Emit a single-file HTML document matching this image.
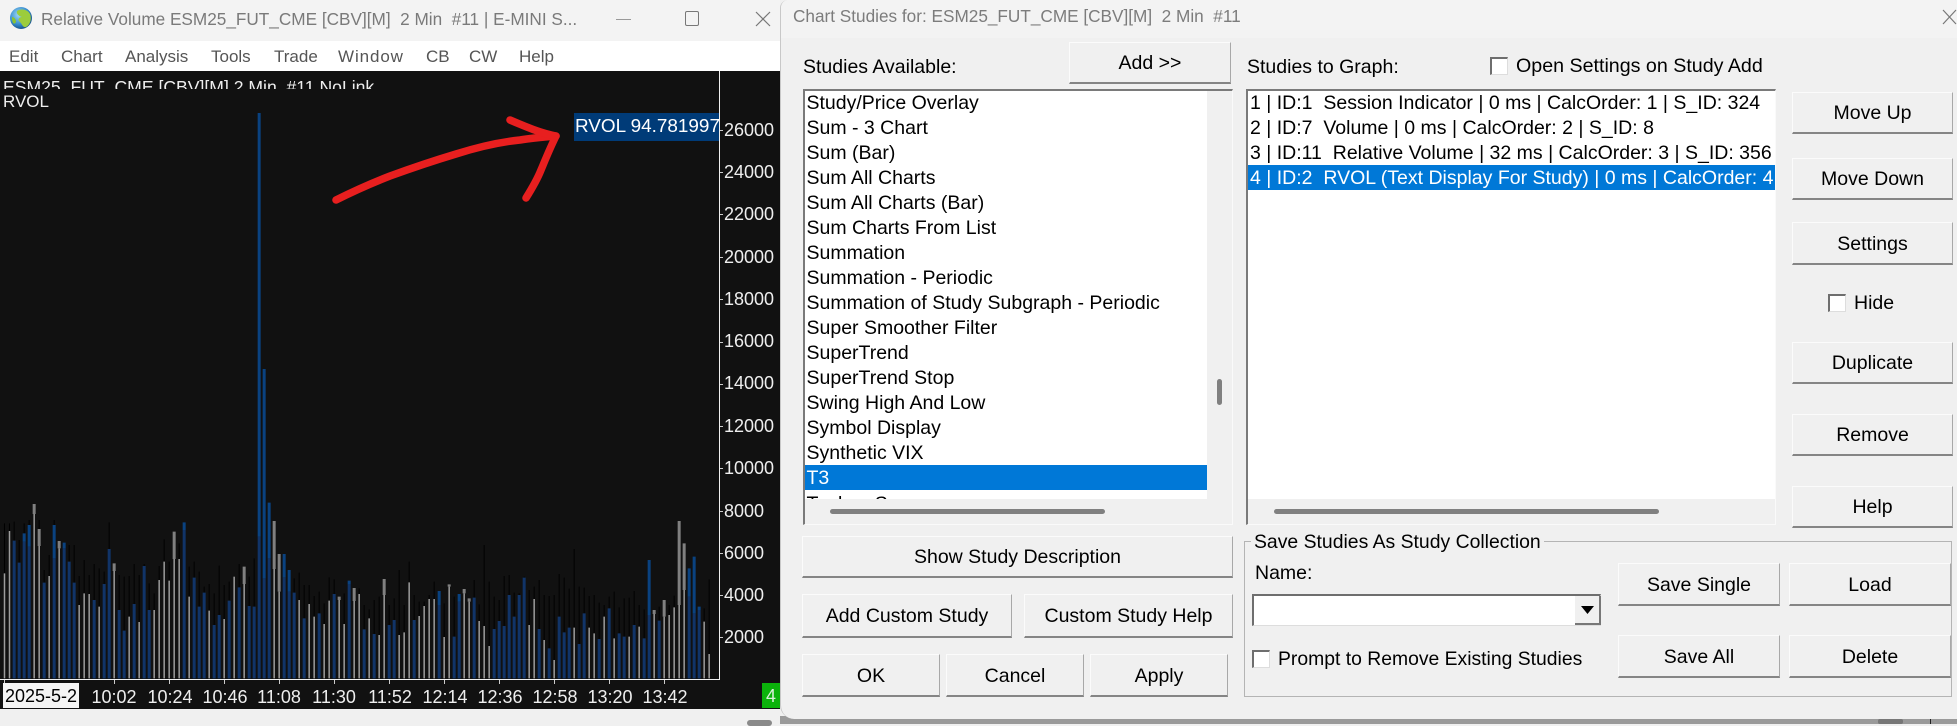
<!DOCTYPE html>
<html><head><meta charset="utf-8"><title>Chart Studies</title>
<style>
html,body{margin:0;padding:0;background:#f0f0f0}
body{width:1957px;height:724px;position:relative;overflow:hidden;font-family:"Liberation Sans",sans-serif;color:#000}
.a{position:absolute}
.t{position:absolute;white-space:pre;height:24px;line-height:24px}
.m{font-size:17px;color:#555;top:45px}
.y{font-size:18px;color:#eee;left:724px;height:22px;line-height:22px}
.x{font-size:18px;color:#eee;top:686px;width:60px;text-align:center;height:22px;line-height:22px}
.s{position:absolute;font-size:19.5px;white-space:pre;height:25px;line-height:25px;left:1.5px}
.b{position:absolute;box-sizing:border-box;background:#f0f0f0;border-top:1px solid #fbfbfb;border-left:1px solid #fbfbfb;border-right:1px solid #a8a8a8;border-bottom:2px solid #858585;display:flex;align-items:center;justify-content:center;font-size:19.5px;white-space:pre;padding-top:2px}
.f{font-size:19.5px}
.c{position:absolute;box-sizing:border-box;background:#fff;border-top:2px solid #6e6e6e;border-left:2px solid #6e6e6e;border-right:1px solid #ddd;border-bottom:1px solid #ddd;width:18px;height:18px}
.l{position:absolute;box-sizing:border-box;background:#f0f0f0;border-top:2px solid #7a7a7a;border-left:2px solid #7a7a7a;border-right:1px solid #fafafa;border-bottom:1px solid #fafafa;overflow:hidden}
.bar{position:absolute;height:5px;background:#808080;border-radius:3px}
</style></head><body>

<!-- Left window -->
<div class="a" style="left:0;top:0;width:780px;height:41px;background:#f3f3f3"></div>
<div class="a" style="left:0;top:41px;width:780px;height:30px;background:#fff"></div>
<svg class="a" style="left:9px;top:6px" width="24" height="24" viewBox="0 0 24 24">
<defs><radialGradient id="g" cx="40%" cy="35%" r="70%"><stop offset="0" stop-color="#a0daf5"/><stop offset=".6" stop-color="#3a8fd0"/><stop offset="1" stop-color="#124a80"/></radialGradient></defs>
<circle cx="12" cy="12" r="11" fill="url(#g)"/>
<path d="M8 5C13 2 19 4 21 8C23 13 21 19 17 21C14 22 13 18 11 16C8 14 10 11 13 11C10 10 7 8 8 5Z" fill="#9ccc3c"/>
<path d="M3 11C5 11 7 13 7 16C6 18 5 18 4 17C3 15 3 13 3 11Z" fill="#8ac234"/>
</svg>
<div class="t" style="left:41px;top:7px;font-size:17.2px;color:#7a7a7a">Relative Volume ESM25_FUT_CME [CBV][M]  2 Min  #11 | E-MINI S...</div>
<div class="a" style="left:616px;top:19px;width:15px;height:1px;background:#999"></div>
<div class="a" style="left:685px;top:11px;width:14px;height:15px;box-sizing:border-box;border:1px solid #777;border-radius:2px"></div>
<svg class="a" style="left:755px;top:11px" width="16" height="16"><path d="M1 1L15 15M15 1L1 15" stroke="#777" stroke-width="1.2"/></svg>
<div class="t m" style="left:9px">Edit</div>
<div class="t m" style="left:61px">Chart</div>
<div class="t m" style="left:125px">Analysis</div>
<div class="t m" style="left:211px">Tools</div>
<div class="t m" style="left:274px">Trade</div>
<div class="t m" style="left:338px;letter-spacing:.9px">Window</div>
<div class="t m" style="left:426px">CB</div>
<div class="t m" style="left:469px">CW</div>
<div class="t m" style="left:519px">Help</div>

<!-- Chart -->
<div class="a" style="left:0;top:71px;width:780px;height:638px;background:#111"></div>
<div class="a" style="left:0;top:71px;width:719px;height:18px;overflow:hidden">
<div class="t" style="left:3px;top:4px;font-size:17.6px;color:#eee">ESM25_FUT_CME [CBV][M] 2 Min  #11 NoLink</div></div>
<div class="t" style="left:3px;top:90px;font-size:17px;color:#eee">RVOL</div>

<svg class="a" style="left:0;top:0" width="720" height="680" viewBox="0 0 720 680">
<g transform="translate(-0.167 490) scale(.33333)" fill="none">
<path stroke="#000" stroke-width="3" d="M14 100V250M29 100V123M43 95V152M58 150V218M73 100V130M88 90V105M118 90V117M133 240V278M148 195V258M163 90V105M208 165V215M223 165V278M238 258V345M253 210V310M268 255V312M283 222V330M298 235V350M313 245V282M328 97V177M358 255V360M373 260V422M388 258V380M403 222V342M418 255V396M433 222V228M448 280V360M463 310V360M478 228V270M493 148V215M508 215V272M538 160V207M568 230V320M583 215V263M598 245V350M613 290V308M628 282V362M643 310V405M658 227V375M673 285V387M688 275V332M703 258V260M718 222V292M748 260V348M763 205V350M883 265V308M898 248V330M913 285V385M928 285V342M943 318V380M958 305V370M973 340V402M988 262V332M1003 268V312M1033 310V402M1078 295V312M1093 345V418M1108 358V385M1123 330V432M1138 320V435M1168 345V405M1183 325V390M1198 240V435M1213 345V427M1228 215V277M1243 315V390M1258 335V378M1273 335V348M1288 315V327M1303 275V327M1333 340V441M1363 320V440M1423 270V323M1438 343V393M1453 165V408M1468 275V468M1483 320V417M1498 330V393M1513 258V408M1528 255V315M1543 308V380M1558 310V315M1573 260V263M1588 300V405M1603 290V327M1618 270V417M1633 315V450M1648 318V475M1663 315V510M1678 252V380M1693 263V427M1708 296V413M1723 177V413M1738 290V462M1753 293V370M1768 318V413M1783 315V430M1798 338V447M1813 345V380M1828 320V355M1843 305V445M1858 352V430M1873 325V440M1888 323V440M1903 303V405M1918 345V410M1933 358V445M1978 350V392M2008 345V375M2023 317V352M2113 355V395M2128 268V492"/>
<path stroke="#113468" stroke-width="9" d="M43 152V565M58 218V565M73 155V565M88 170V565M133 278V565M163 205V565M193 175V565M208 215V565M223 278V565M283 330V565M313 282V565M328 177V565M358 360V565M373 422V565M403 342V565M433 228V565M448 360V565M553 120V565M583 263V565M598 350V565M613 308V565M643 405V565M658 375V565M688 332V565M718 292V565M748 348V565M763 350V565M778 140V565M793 265V565M808 205V565M853 262V565M868 305V565M883 308V565M913 385V565M958 370V565M1003 312V565M1048 283V565M1093 418V565M1123 432V565M1168 405V565M1183 390V565M1243 390V565M1318 345V565M1363 440V565M1378 335V565M1423 323V565M1483 417V565M1498 393V565M1513 408V565M1528 315V565M1543 380V565M1558 315V565M1573 263V565M1618 417V565M1648 475V565M1678 380V565M1693 427V565M1708 413V565M1738 462V565M1753 370V565M1798 447V565M1828 355V565M1858 430V565M1873 440V565M1903 405V565M1933 445V565M1948 375V565M1978 392V565M2068 320V565M2083 370V565M2098 360V565"/>
<path stroke="#0a4280" stroke-width="9" d="M73 130V155M88 105V170M163 105V205M193 158V175M553 97V120M778 -1131V140M793 -363V265M808 38V205M853 192V262M868 240V305M1048 272V283M1318 303V345M1378 312V335M1948 210V375M2068 235V320M2083 200V370M2098 350V360"/>
<path stroke="#808080" stroke-width="9" d="M103 42V72M118 117V168M178 153V175M343 220V243M523 125V207M733 230V282M823 93V237M838 192V305M1018 320V330M1063 294V333M1153 267V315M1348 283V290M1393 297V310M1408 325V335M1963 360V372M1993 330V380M2038 93V345M2053 160V300"/>
<path stroke="#9c9c9c" stroke-width="4.5" d="M14 250V565M29 123V565M103 72V565M118 168V565M148 258V565M178 175V565M238 345V565M253 310V565M268 312V565M298 350V565M343 243V565M388 380V565M418 396V565M463 360V565M478 270V565M493 215V565M508 272V565M523 207V565M538 207V565M568 320V565M628 362V565M673 387V565M703 260V565M733 282V565M823 237V565M838 305V565M898 330V565M928 342V565M943 380V565M973 402V565M988 332V565M1018 330V565M1033 402V565M1063 333V565M1078 312V565M1108 385V565M1138 435V565M1153 315V565M1198 435V565M1213 427V565M1228 277V565M1258 378V565M1273 348V565M1288 327V565M1303 327V565M1333 441V565M1348 290V565M1393 310V565M1408 335V565M1438 393V565M1453 408V565M1468 468V565M1588 405V565M1603 327V565M1633 450V565M1663 510V565M1723 413V565M1768 413V565M1783 430V565M1813 380V565M1843 445V565M1888 440V565M1918 410V565M1963 372V565M1993 380V565M2008 375V565M2023 352V565M2038 345V565M2053 300V565M2113 395V565M2128 492V565"/>
</g>
<!-- axes -->
<path d="M719.5 71V679.5H0" stroke="#f0f0f0" stroke-width="1" fill="none"/>
</svg>

<!-- axis ticks -->
<svg class="a" style="left:0;top:0" width="780" height="690">
<path stroke="#ccc" stroke-width="1" d="M720 130.5h3M720 172.5h3M720 214.5h3M720 257.5h3M720 299.5h3M720 342.5h3M720 384.5h3M720 426.5h3M720 468.5h3M720 511.5h3M720 553.5h3M720 595.5h3M720 637.5h3M4.5 680v4M114.5 680v4M169.5 680v4M224.5 680v4M279.5 680v4M334.5 680v4M389.5 680v4M444.5 680v4M499.5 680v4M554.5 680v4M609.5 680v4M664.5 680v4"/>
</svg>

<div class="t" style="left:574px;top:113px;width:145px;height:28px;line-height:28px;background:#003b78;color:#fff;font-size:18.9px;overflow:hidden;padding-left:1px;box-sizing:border-box">RVOL 94.781997</div>

<div class="t y" style="top:119px">26000</div>
<div class="t y" style="top:161px">24000</div>
<div class="t y" style="top:203px">22000</div>
<div class="t y" style="top:246px">20000</div>
<div class="t y" style="top:288px">18000</div>
<div class="t y" style="top:330px">16000</div>
<div class="t y" style="top:372px">14000</div>
<div class="t y" style="top:415px">12000</div>
<div class="t y" style="top:457px">10000</div>
<div class="t y" style="top:500px">8000</div>
<div class="t y" style="top:542px">6000</div>
<div class="t y" style="top:584px">4000</div>
<div class="t y" style="top:626px">2000</div>

<div class="t" style="left:3px;top:683px;width:76px;height:25px;line-height:27px;background:#f4f4f4;color:#000;font-size:18px;text-align:center">2025-5-2</div>
<div class="t x" style="left:84px">10:02</div>
<div class="t x" style="left:140px">10:24</div>
<div class="t x" style="left:195px">10:46</div>
<div class="t x" style="left:249px">11:08</div>
<div class="t x" style="left:304px">11:30</div>
<div class="t x" style="left:360px">11:52</div>
<div class="t x" style="left:415px">12:14</div>
<div class="t x" style="left:470px">12:36</div>
<div class="t x" style="left:525px">12:58</div>
<div class="t x" style="left:580px">13:20</div>
<div class="t x" style="left:635px">13:42</div>
<div class="t" style="left:762px;top:683px;width:18px;height:25px;line-height:26px;background:#0bb30b;color:#d8f0d8;font-size:18px;text-align:center">4</div>

<!-- Red arrow -->
<svg class="a" style="left:320px;top:105px" width="260" height="110" viewBox="320 105 260 110">
<path d="M336 200C352 192 372 183 390 176C412 168 436 160 456 154C478 147 500 142 520 140C532 138 544 137 556 136" fill="none" stroke="#e81f1f" stroke-width="7.5" stroke-linecap="round"/>
<path d="M510 120C524 126 540 133 556 136C550 148 546 158 541 170C537 180 531 190 526 198" fill="none" stroke="#e81f1f" stroke-width="7.5" stroke-linecap="round" stroke-linejoin="round"/>
</svg>

<!-- Bottom strip -->
<div class="a" style="left:747px;top:720px;width:25px;height:6px;border-radius:3px;background:#8a8a8a"></div>
<div class="a" style="left:780px;top:716px;width:1177px;height:8px;background:#9a9a9a"></div>
<div class="a" style="left:1878px;top:719px;width:25px;height:5px;background:#777;border-radius:2px"></div>
<div class="a" style="left:1930px;top:719px;width:1px;height:5px;background:#222"></div>

<!-- Dialog -->
<div class="a" style="left:780px;top:0;width:1177px;height:719px;background:#f0f0f0;border-left:1px solid #c8c8c8;box-sizing:border-box;border-bottom-left-radius:14px;border-top-left-radius:8px;overflow:hidden">
<div class="a" style="left:0;top:0;width:1177px;height:38px;background:#f3f3f3"></div>
</div>
<div class="t" style="left:793px;top:4px;font-size:17.2px;color:#7c7c7c">Chart Studies for: ESM25_FUT_CME [CBV][M]  2 Min  #11</div>
<svg class="a" style="left:1942px;top:9px" width="15" height="16"><path d="M1 1L14 15M14 1L1 15" stroke="#777" stroke-width="1.2"/></svg>

<div class="t f" style="left:803px;top:55px">Studies Available:</div>
<div class="b" style="left:1069px;top:42px;width:162px;height:42px">Add &gt;&gt;</div>
<div class="t f" style="left:1247px;top:55px">Studies to Graph:</div>
<div class="c" style="left:1490px;top:57px"></div>
<div class="t" style="left:1516px;top:54px;font-size:19.65px">Open Settings on Study Add</div>

<!-- Left list -->
<div class="l" style="left:803px;top:89px;width:430px;height:436px">
  <div class="a" style="left:0;top:0;width:402px;height:408px;background:#fff;overflow:hidden">
    <div class="s" style="top:0">Study/Price Overlay</div>
    <div class="s" style="top:25px">Sum - 3 Chart</div>
    <div class="s" style="top:50px">Sum (Bar)</div>
    <div class="s" style="top:75px">Sum All Charts</div>
    <div class="s" style="top:100px">Sum All Charts (Bar)</div>
    <div class="s" style="top:125px">Sum Charts From List</div>
    <div class="s" style="top:150px">Summation</div>
    <div class="s" style="top:175px">Summation - Periodic</div>
    <div class="s" style="top:200px">Summation of Study Subgraph - Periodic</div>
    <div class="s" style="top:225px">Super Smoother Filter</div>
    <div class="s" style="top:250px">SuperTrend</div>
    <div class="s" style="top:275px">SuperTrend Stop</div>
    <div class="s" style="top:300px">Swing High And Low</div>
    <div class="s" style="top:325px">Symbol Display</div>
    <div class="s" style="top:350px">Synthetic VIX</div>
    <div class="a" style="left:0;top:374px;width:402px;height:25px;background:#0078d7"></div>
    <div class="s" style="top:375px;color:#fff">T3</div>
    <div class="s" style="top:401px">Tenkan Sen</div>
  </div>
  <div class="bar" style="left:25px;top:418px;width:275px"></div>
  <div class="a" style="left:412px;top:288px;width:5px;height:26px;background:#808080;border-radius:3px"></div>
</div>

<!-- Right list -->
<div class="l" style="left:1246px;top:89px;width:530px;height:436px">
  <div class="a" style="left:0;top:0;width:527px;height:408px;background:#fff;overflow:hidden">
    <div class="s" style="left:2px;top:0">1 | ID:1  Session Indicator | 0 ms | CalcOrder: 1 | S_ID: 324</div>
    <div class="s" style="left:2px;top:25px">2 | ID:7  Volume | 0 ms | CalcOrder: 2 | S_ID: 8</div>
    <div class="s" style="left:2px;top:50px">3 | ID:11  Relative Volume | 32 ms | CalcOrder: 3 | S_ID: 356</div>
    <div class="a" style="left:0;top:74px;width:527px;height:25px;background:#0078d7"></div>
    <div class="s" style="left:2px;top:75px;color:#fff">4 | ID:2  RVOL (Text Display For Study) | 0 ms | CalcOrder: 4</div>
  </div>
  <div class="bar" style="left:26px;top:418px;width:385px"></div>
</div>

<!-- Right buttons -->
<div class="b" style="left:1792px;top:92px;width:161px;height:42px">Move Up</div>
<div class="b" style="left:1792px;top:158px;width:161px;height:42px">Move Down</div>
<div class="b" style="left:1792px;top:222px;width:161px;height:43px">Settings</div>
<div class="c" style="left:1828px;top:294px"></div>
<div class="t f" style="left:1854px;top:291px">Hide</div>
<div class="b" style="left:1792px;top:342px;width:161px;height:42px">Duplicate</div>
<div class="b" style="left:1792px;top:414px;width:161px;height:42px">Remove</div>
<div class="b" style="left:1792px;top:486px;width:161px;height:42px">Help</div>

<!-- Lower left buttons -->
<div class="b" style="left:802px;top:536px;width:431px;height:42px">Show Study Description</div>
<div class="b" style="left:802px;top:594px;width:210px;height:44px">Add Custom Study</div>
<div class="b" style="left:1024px;top:594px;width:209px;height:44px">Custom Study Help</div>
<div class="b" style="left:802px;top:654px;width:138px;height:43px">OK</div>
<div class="b" style="left:946px;top:654px;width:138px;height:43px">Cancel</div>
<div class="b" style="left:1090px;top:654px;width:138px;height:43px">Apply</div>

<!-- Group -->
<div class="a" style="left:1244px;top:541px;width:708px;height:156px;box-sizing:border-box;border:1px solid #b4b4b4"></div>
<div class="t" style="left:1251px;top:530px;background:#f0f0f0;padding:0 3px;font-size:19.4px">Save Studies As Study Collection</div>
<div class="t f" style="left:1255px;top:561px">Name:</div>
<div class="a" style="left:1252px;top:594px;width:349px;height:32px;box-sizing:border-box;background:#fff;border-top:2px solid #6e6e6e;border-left:2px solid #6e6e6e;border-right:1px solid #ddd;border-bottom:1px solid #ddd"></div>
<div class="a" style="left:1575px;top:596px;width:26px;height:29px;box-sizing:border-box;background:#f0f0f0;border-right:2px solid #777;border-bottom:2px solid #777"></div>
<svg class="a" style="left:1581px;top:606px" width="13" height="8"><path d="M0 0H13L6.5 8Z" fill="#000"/></svg>
<div class="c" style="left:1252px;top:650px"></div>
<div class="t" style="left:1278px;top:647px;font-size:19.35px">Prompt to Remove Existing Studies</div>
<div class="b" style="left:1618px;top:563px;width:162px;height:43px">Save Single</div>
<div class="b" style="left:1789px;top:563px;width:162px;height:43px">Load</div>
<div class="b" style="left:1618px;top:635px;width:162px;height:43px">Save All</div>
<div class="b" style="left:1789px;top:635px;width:162px;height:43px">Delete</div>

</body></html>
